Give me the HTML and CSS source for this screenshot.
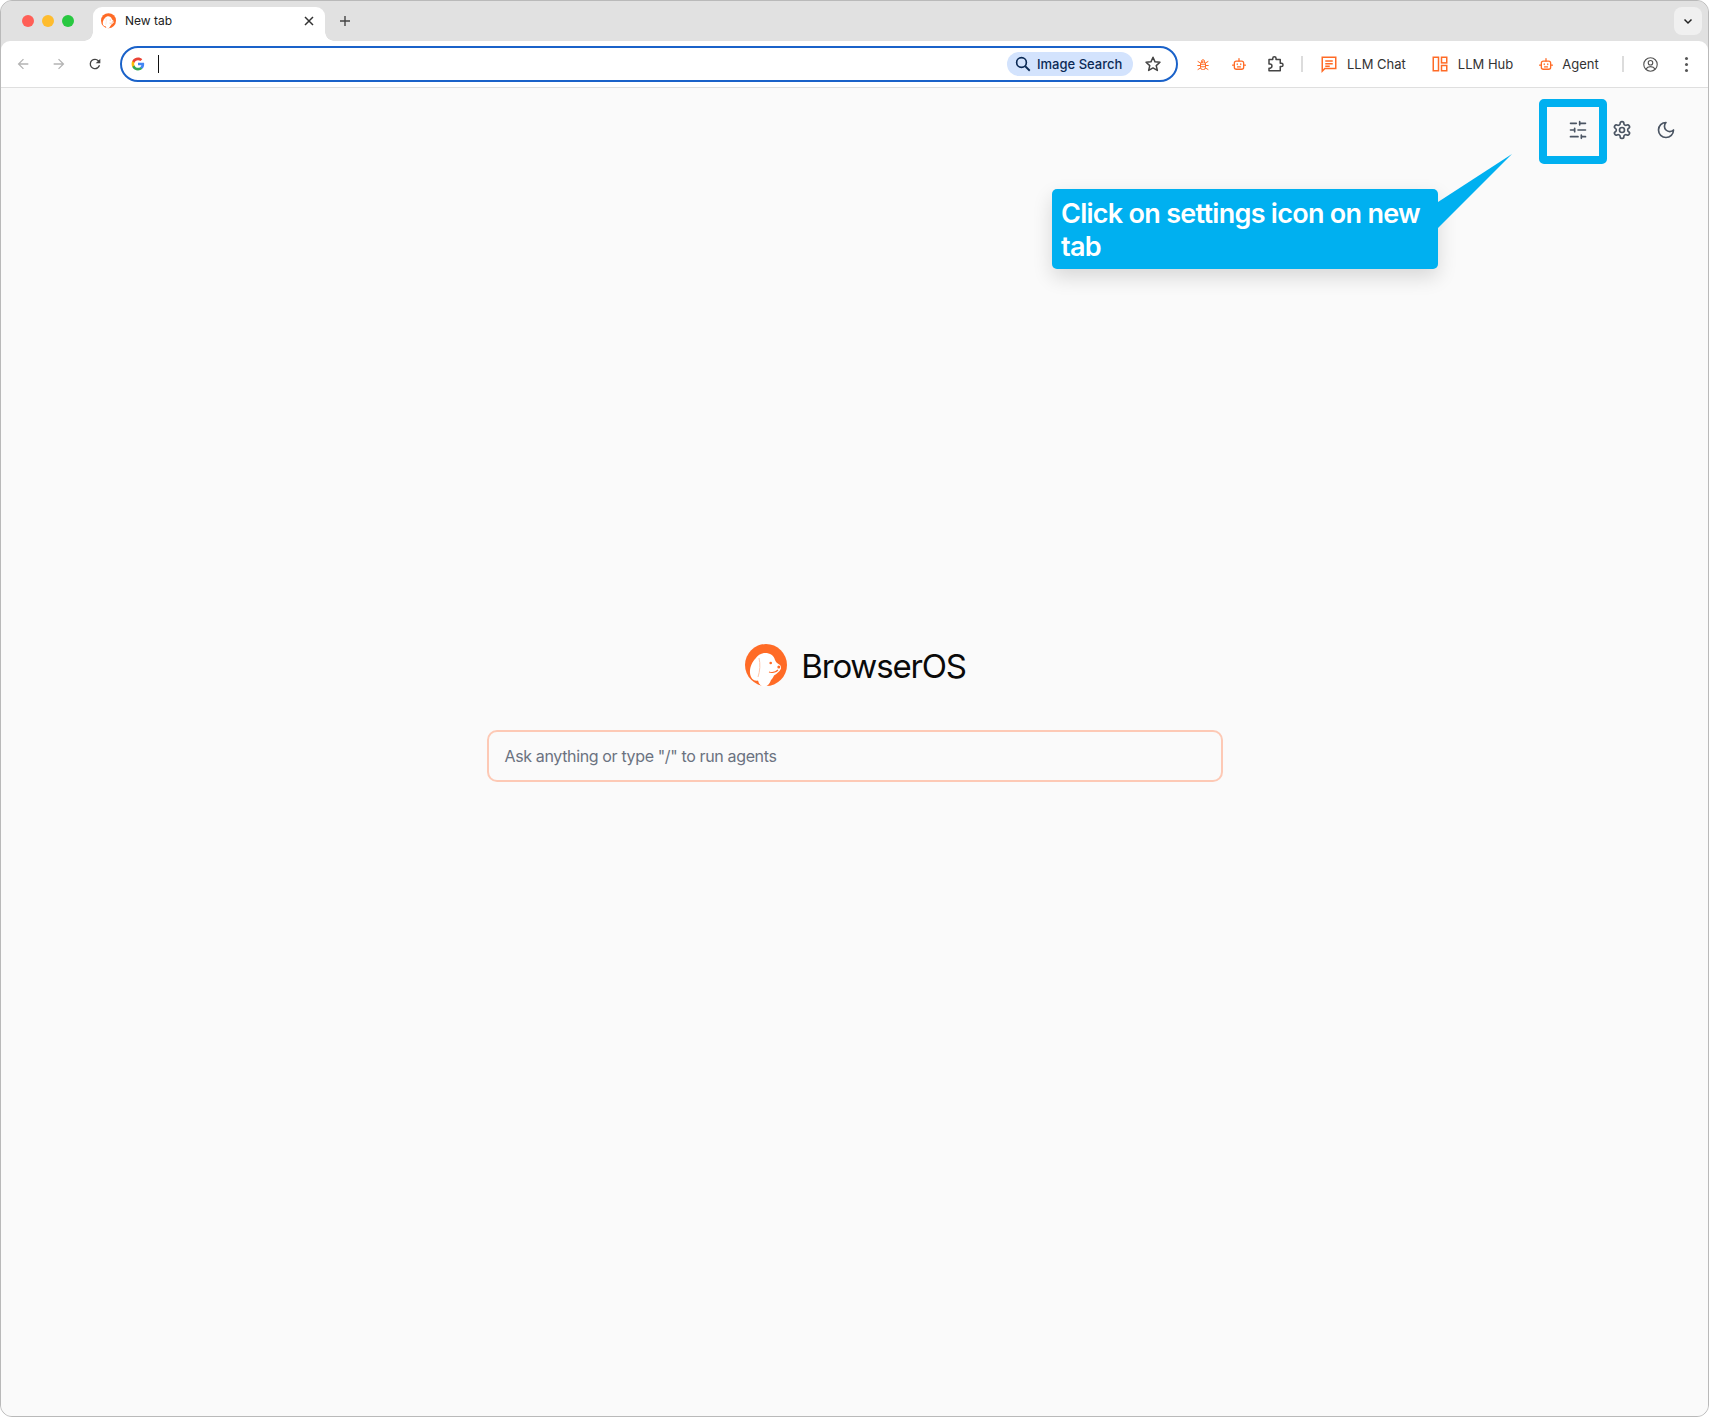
FILE: index.html
```html
<!DOCTYPE html>
<html lang="en">
<head>
    <meta charset="UTF-8">
    <title>New tab</title>
    <link rel="stylesheet" href="styles.css">
</head>
<body>
<svg class="defs" width="0" height="0">
    <symbol id="dog" viewBox="0 0 42 44">
        <circle cx="21" cy="21" r="21" fill="#ff6b26"/>
        <path d="M19 9C24 8.500 29 11 30 16C31 18 32 19.500 35 21C37 23 36 26 33.500 28C32 29.500 30.500 30.500 29 31.500C28 34 27 35 26 36C25 39 23 42 20 42.500C17 43 14 41 13 36.500C9 37.500 5.500 34.500 5 29C4.500 24 7 18 10.500 14.500C12.500 11.500 15.500 9.500 19 9z" fill="#fff"/>
        <path d="M14 14C15.500 20 15 27 13 33" fill="none" stroke="#ffc4a8" stroke-width="1"/>
        <circle cx="25.700" cy="19" r="1.300" fill="#ff6b26"/>
        <circle cx="33.800" cy="23" r="1.500" fill="#ff6b26"/>
        <path d="M33 26c-2 2-6 3-9 2" fill="none" stroke="#ff6b26" stroke-width="1.100"/>
    </symbol>
    <symbol id="bot" viewBox="0 0 24 24">
        <g fill="none" stroke="#ff6b26" stroke-width="2.200" stroke-linecap="round" stroke-linejoin="round">
            <path d="M12 7V3"/>
            <rect x="4" y="7" width="16" height="14" rx="3.500"/>
            <path d="M1 14h3M20 14h3M9 12v1M15 12v1M9.500 17h5"/>
        </g>
    </symbol>
</svg>

<div class="window">
    <div class="tabstrip">
        <div class="lights">
            <span class="light red"></span>
            <span class="light yellow"></span>
            <span class="light green"></span>
        </div>
        <div class="tab">
            <svg class="favicon"><use href="#dog"/></svg>
            <span class="tab-title">New tab</span>
            <svg class="tab-close" viewBox="0 0 12 12"><path d="M2 2l8 8M10 2l-8 8" stroke="#333" stroke-width="1.500"/></svg>
        </div>
        <svg class="new-tab" viewBox="0 0 12 12"><path d="M6 1v10M1 6h10" stroke="#444" stroke-width="1.400"/></svg>
        <div class="tab-search">
            <svg viewBox="0 0 12 12" width="12" height="12"><path d="M2.500 4.500L6 8l3.500-3.500" fill="none" stroke="#222" stroke-width="1.500"/></svg>
        </div>
    </div>

    <div class="toolbar">
        <div class="nav">
            <svg class="nav-icon" viewBox="0 0 24 24"><path d="M20 11H7.800l5.600-5.600L12 4l-8 8 8 8 1.400-1.400L7.800 13H20z" fill="#b4b4b4"/></svg>
            <svg class="nav-icon" viewBox="0 0 24 24"><path d="M4 11h12.200l-5.600-5.600L12 4l8 8-8 8-1.400-1.400 5.600-5.600H4z" fill="#b4b4b4"/></svg>
            <svg class="nav-icon" viewBox="0 0 24 24"><path d="M17.650 6.350A7.950 7.950 0 0 0 12 4a8 8 0 1 0 7.730 10h-2.080A6 6 0 1 1 12 6c1.660 0 3.140.690 4.220 1.780L13 11h7V4z" fill="#444"/></svg>
        </div>
        <div class="omnibox">
            <svg class="g-logo" viewBox="0 0 24 24">
                <path d="M22.560 12.250c0-.780-.070-1.530-.200-2.250H12v4.260h5.920c-.260 1.370-1.040 2.530-2.210 3.310v2.770h3.570c2.080-1.920 3.280-4.740 3.280-8.090z" fill="#4285f4"/>
                <path d="M12 23c2.970 0 5.460-.980 7.280-2.660l-3.570-2.770c-.980.660-2.230 1.060-3.710 1.060-2.860 0-5.290-1.930-6.160-4.530H2.180v2.840C3.990 20.530 7.700 23 12 23z" fill="#34a853"/>
                <path d="M5.840 14.090c-.220-.660-.350-1.360-.350-2.090s.130-1.430.350-2.090V7.070H2.180C1.430 8.550 1 10.220 1 12s.430 3.450 1.180 4.930l3.660-2.840z" fill="#fbbc05"/>
                <path d="M12 5.380c1.620 0 3.060.560 4.210 1.640l3.150-3.150C17.450 2.090 14.970 1 12 1 7.700 1 3.990 3.470 2.180 7.070l3.660 2.840c.870-2.600 3.300-4.530 6.160-4.530z" fill="#ea4335"/>
            </svg>
            <span class="caret"></span>
            <div class="image-search">
                <svg viewBox="0 0 24 24" width="18" height="18"><circle cx="10" cy="10" r="6.500" fill="none" stroke="#0b2a55" stroke-width="2.200"/><path d="M15 15l6 6" stroke="#0b2a55" stroke-width="2.400"/></svg>
                <span>Image Search</span>
            </div>
            <svg class="star" viewBox="0 0 24 24"><path d="M12 3l2.700 6.100 6.600.6-5 4.400 1.500 6.500L12 17.200l-5.800 3.400 1.500-6.500-5-4.400 6.600-.6z" fill="none" stroke="#444" stroke-width="2" stroke-linejoin="round"/></svg>
        </div>
        <div class="actions">
            <svg class="ext-icon bug" viewBox="0 0 24 24"><g fill="none" stroke="#ff6b26" stroke-width="2" stroke-linecap="round"><rect x="7" y="7" width="10" height="15" rx="4"/><path d="M9 7V5.500a3 3 0 0 1 6 0V7M7 11.500h10M7 16.500h10M2 6l5 3M22 6l-5 3M1.500 14H7M22.500 14H17M2 22l5-3M22 22l-5-3"/></g></svg>
            <svg class="ext-icon"><use href="#bot"/></svg>
            <svg class="ext-icon puzzle" viewBox="0 0 24 24"><path d="M4 6h5V4.500a2.200 2.200 0 0 1 4.400 0V6H19v5h1.500a2.200 2.200 0 0 1 0 4.400H19V21H4v-3.500h1.200a2.700 2.700 0 0 0 0-5.400H4z" fill="none" stroke="#444" stroke-width="2" stroke-linejoin="round"/></svg>
            <span class="sep"></span>
            <div class="pin pin-chat">
                <svg class="pin-icon" viewBox="0 0 24 24"><path d="M3 3h18v15H6.500L3 21.500z" fill="none" stroke="#ff6b26" stroke-width="2"/><path d="M7 8h10M7 11.500h10M7 15h6" stroke="#ff6b26" stroke-width="2"/></svg>
                <span>LLM Chat</span>
            </div>
            <div class="pin pin-hub">
                <svg class="pin-icon" viewBox="0 0 24 24"><g fill="none" stroke="#ff6b26" stroke-width="2"><rect x="3" y="3" width="7" height="18"/><rect x="14" y="3" width="7" height="7.500"/><rect x="14" y="14" width="7" height="7"/></g></svg>
                <span>LLM Hub</span>
            </div>
            <div class="pin pin-agent">
                <svg class="agent-icon"><use href="#bot"/></svg>
                <span>Agent</span>
            </div>
            <span class="sep sep-right"></span>
            <svg class="profile" viewBox="0 0 24 24"><g fill="none" stroke="#555" stroke-width="1.600"><circle cx="12" cy="12" r="9.500"/><circle cx="12" cy="9.500" r="3.200"/><path d="M5.500 18.500c1.500-2.500 4-3.500 6.500-3.500s5 1 6.500 3.500"/></g></svg>
            <div class="kebab"><i></i><i></i><i></i></div>
        </div>
    </div>

    <div class="page">
        <div class="page-tools">
            <div class="tool">
                <svg class="lucide" viewBox="0 0 24 24"><path d="M21 4h-7M10 4H3M21 12h-9M8 12H3M21 20h-5M12 20H3M14 2v4M8 10v4M16 18v4"/></svg>
            </div>
            <div class="tool">
                <svg class="lucide" viewBox="0 0 24 24"><path d="M12.220 2h-.440a2 2 0 0 0-2 2v.180a2 2 0 0 1-1 1.730l-.430.250a2 2 0 0 1-2 0l-.150-.080a2 2 0 0 0-2.730.730l-.220.380a2 2 0 0 0 .730 2.730l.150.100a2 2 0 0 1 1 1.720v.510a2 2 0 0 1-1 1.740l-.150.090a2 2 0 0 0-.730 2.730l.220.380a2 2 0 0 0 2.730.730l.150-.080a2 2 0 0 1 2 0l.430.250a2 2 0 0 1 1 1.730V20a2 2 0 0 0 2 2h.440a2 2 0 0 0 2-2v-.180a2 2 0 0 1 1-1.730l.430-.250a2 2 0 0 1 2 0l.150.080a2 2 0 0 0 2.730-.730l.220-.390a2 2 0 0 0-.730-2.730l-.150-.080a2 2 0 0 1-1-1.740v-.500a2 2 0 0 1 1-1.740l.150-.090a2 2 0 0 0 .730-2.730l-.220-.380a2 2 0 0 0-2.730-.730l-.150.080a2 2 0 0 1-2 0l-.430-.250a2 2 0 0 1-1-1.730V4a2 2 0 0 0-2-2z"/><circle cx="12" cy="12" r="3"/></svg>
            </div>
            <div class="tool">
                <svg class="lucide" viewBox="0 0 24 24"><path d="M12 3a6 6 0 0 0 9 9 9 9 0 1 1-9-9Z"/></svg>
            </div>
        </div>

        <div class="hero">
            <div class="brand">
                <svg class="brand-logo"><use href="#dog"/></svg>
                <span class="brand-name">BrowserOS</span>
            </div>
            <div class="ask">Ask anything or type "/" to run agents</div>
        </div>

        <div class="highlight"></div>
        <div class="callout">
            Click on settings icon on new tab
            <svg class="callout-tail" viewBox="0 0 76 74"><path d="M0 48L74 0 0 74z" fill="#00b0f0"/></svg>
        </div>
    </div>
</div>
</body>
</html>
```

FILE: styles.css
```css
*{
    margin:0;
    padding:0;
    box-sizing:border-box;
}
html,body{
    height:100%;
    background:#fff;
    font-family:"Inter","Noto Sans",sans-serif;
}
.defs{
    position:absolute;
}
.window{
    width:1709px;
    height:1417px;
    border:1px solid #b9b9b9;
    border-radius:12px;
    overflow:hidden;
    display:flex;
    flex-direction:column;
    background:#e1e1e1;
}

/* tab strip */
.tabstrip{
    height:40px;
    background:#e1e1e1;
    display:flex;
    align-items:flex-end;
    flex:none;
}
.lights{
    display:flex;
    gap:8px;
    width:92px;
    height:34px;
    padding:8px 0 0 21px;
}
.light{
    width:12px;
    height:12px;
    border-radius:50%;
}
.red{background:#ff5f57;}
.yellow{background:#febc2e;}
.green{background:#28c840;}
.tab{
    position:relative;
    width:232px;
    height:34px;
    background:#fff;
    border-radius:9px 9px 0 0;
    display:flex;
    align-items:center;
    padding:0 10px 7px 8px;
}
.tab::before,
.tab::after{
    content:"";
    position:absolute;
    bottom:0;
    width:9px;
    height:9px;
}
.tab::before{
    left:-9px;
    background:radial-gradient(circle at 0 0,transparent 8.5px,#fff 9px);
}
.tab::after{
    right:-9px;
    background:radial-gradient(circle at 100% 0,transparent 8.5px,#fff 9px);
}
.favicon{
    width:15px;
    height:16px;
    flex:none;
}
.tab-title{
    font-size:12px;
    color:#222;
    margin-left:9px;
    flex:1;
}
.tab-close{
    width:12px;
    height:12px;
}
.new-tab{
    width:12px;
    height:12px;
    margin:0 0 14px 14px;
}
.tab-search{
    width:28px;
    height:28px;
    margin:0 6px 6px auto;
    background:#f0f0f0;
    border-radius:8px;
    display:flex;
    align-items:center;
    justify-content:center;
}

/* toolbar */
.toolbar{
    height:47px;
    background:#fff;
    border-bottom:1px solid #dfdfdf;
    border-radius:9px 9px 0 0;
    display:flex;
    align-items:center;
    flex:none;
}
.nav{
    display:flex;
    gap:20px;
    width:119px;
    padding-left:14px;
}
.nav-icon{
    width:16px;
    height:16px;
}
.omnibox{
    width:1058px;
    height:36px;
    border:2px solid #1a62c9;
    border-radius:18px;
    display:flex;
    align-items:center;
    padding:0 14px 0 9px;
    background:#fff;
}
.g-logo{
    width:14px;
    height:14px;
}
.caret{
    width:1px;
    height:18px;
    background:#111;
    margin-left:13px;
}
.image-search{
    margin-left:auto;
    width:126px;
    height:24px;
    border-radius:12px;
    background:#d3e3fd;
    display:flex;
    align-items:center;
    gap:5px;
    padding-left:7px;
    font-size:13px;
    color:#0b2a55;
    font-weight:500;
}
.star{
    width:18px;
    height:18px;
    margin-left:11px;
}
.actions{
    display:flex;
    align-items:center;
    padding-left:18px;
}
.ext-icon{
    width:14px;
    height:14px;
    margin-right:22px;
}
.bug{
    width:12px;
    height:13px;
    margin:0 23px 0 1px;
}
.puzzle{
    width:18px;
    height:18px;
    margin:0 17px 0 -2px;
}
.sep{
    width:2px;
    height:16px;
    background:#dcdcdc;
}
.pin{
    display:flex;
    align-items:center;
    font-size:13px;
    color:#333;
}
.pin-chat{
    margin-left:17px;
    gap:9px;
}
.pin-hub{
    margin-left:25px;
    gap:9px;
}
.pin-agent{
    margin-left:26px;
    gap:9px;
}
.pin-icon{
    width:18px;
    height:18px;
}
.agent-icon{
    width:14px;
    height:14px;
}
.sep-right{
    margin-left:23px;
}
.profile{
    width:17px;
    height:17px;
    margin-left:18px;
}
.kebab{
    display:flex;
    flex-direction:column;
    gap:3px;
    margin-left:26px;
}
.kebab i{
    width:3px;
    height:3px;
    border-radius:50%;
    background:#555;
}

/* page */
.page{
    position:relative;
    flex:1;
    display:flex;
    flex-direction:column;
    align-items:center;
    background:#fafafa;
}
.page-tools{
    align-self:flex-end;
    display:flex;
    gap:8px;
    padding:24px 24px 0 0;
}
.tool{
    width:36px;
    height:36px;
    display:flex;
    align-items:center;
    justify-content:center;
}
.lucide{
    width:20px;
    height:20px;
    fill:none;
    stroke:#4b5563;
    stroke-width:2;
    stroke-linecap:round;
    stroke-linejoin:round;
}
.hero{
    margin-top:496px;
    width:736px;
    display:flex;
    flex-direction:column;
    align-items:center;
}
.brand{
    display:flex;
    align-items:center;
    gap:14px;
    height:44px;
    padding-left:2px;
}
.brand-logo{
    width:42px;
    height:44px;
}
.brand-name{
    font-size:33px;
    letter-spacing:-1.2px;
    color:#0a0a0a;
}
.ask{
    margin-top:42px;
    width:736px;
    height:52px;
    border:2px solid #fdc9b5;
    border-radius:10px;
    padding:0 16px;
    display:flex;
    align-items:center;
    font-size:16px;
    letter-spacing:-0.36px;
    color:#6b7280;
}

/* annotation over the page */
.highlight{
    position:absolute;
    left:1538px;
    top:11px;
    width:68px;
    height:65px;
    border:8px solid #00b0f0;
    border-radius:5px;
}
.callout{
    position:absolute;
    left:1051px;
    top:101px;
    width:386px;
    height:80px;
    padding:8px 9px;
    background:#00b0f0;
    border-radius:5px;
    color:#fff;
    font-size:27px;
    letter-spacing:-0.72px;
    font-weight:600;
    line-height:33px;
    box-shadow:0 8px 20px rgba(0,0,0,0.14);
}
.callout-tail{
    position:absolute;
    left:386px;
    top:-35px;
    width:76px;
    height:74px;
}
```
